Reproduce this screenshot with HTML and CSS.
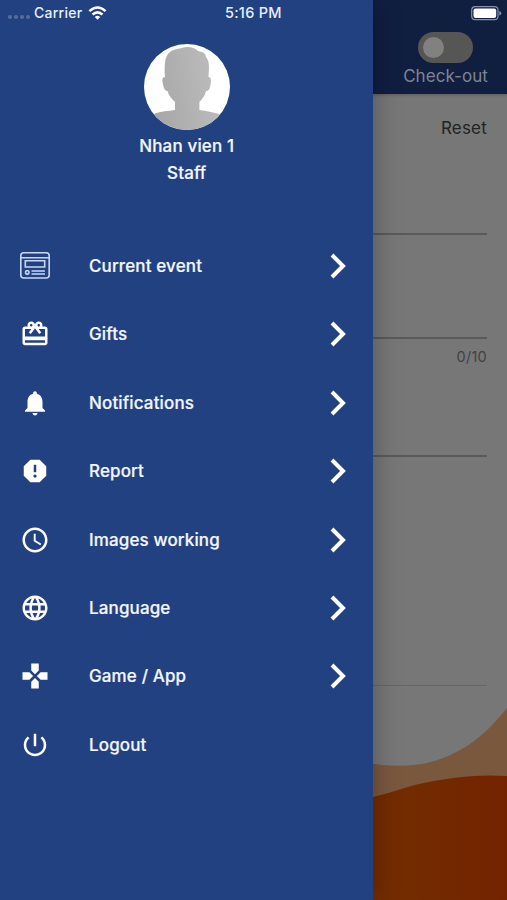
FILE: index.html
```html
<!DOCTYPE html>
<html lang="en">
<head>
<meta charset="utf-8">
<title>Menu</title>
<link rel="stylesheet" href="styles.css">
</head>
<body>
<div class="screen">
  <main class="page">
    <header class="topbar">
      <div class="checkout">
        <div class="switch"><span class="knob"></span></div>
        <span class="switch-label">Check-out</span>
      </div>
    </header>
    <div class="form">
      <div class="reset">Reset</div>
      <div class="field first"></div>
      <div class="field second"></div>
      <div class="counter">0/10</div>
      <div class="field third"></div>
      <div class="field last"></div>
    </div>
    <svg class="waves" viewBox="0 0 147 200" preserveAspectRatio="none">
      <defs><linearGradient id="lava" x1="0" x2="1"><stop offset="0" stop-color="#732d00"/><stop offset=".5" stop-color="#732a00"/><stop offset="1" stop-color="#732300"/></linearGradient></defs>
      <path fill="#7a583e" d="M0 62C42 69 70 67 100 50C119 40 134 24 147 8V200H0Z"/>
      <path fill="url(#lava)" d="M0 99C20 97 38 89 59 84C88 78 112 74 147 76V200H0Z"/>
    </svg>
  </main>
  <aside class="drawer">
    <div class="profile">
      <svg class="avatar" viewBox="0 0 86 86">
        <defs>
          <clipPath id="round"><circle cx="43" cy="43" r="43"/></clipPath>
          <linearGradient id="skin" x1="0" y1=".6" x2="1" y2=".4"><stop offset="0" stop-color="#a6a6a6"/><stop offset="1" stop-color="#bebebe"/></linearGradient>
        </defs>
        <g clip-path="url(#round)">
          <path fill="#fff" d="M0 0H86V86H0Z"/>
          <path fill="url(#skin)" d="M21 33C20.500 26 20 15 24 10C27 6 32 5 38 4C44 2 50 3 54 7C60 8 62 10 62 13C66 17 65 25 64.500 33C67 33 67.500 36 66.500 41C65.500 45 65 47 62 47C61 52 58 55 55.400 58V66C62 67 69 68 75 70L80 73V86H5V73L10 70C17 67 25 67 31 66V58C28 55 25 52 23.500 47C20.500 47 19.500 43 19 40C18 36 18 33 21 33Z"/>
        </g>
      </svg>
      <div class="name">Nhan vien 1</div>
      <div class="role">Staff</div>
    </div>
    <nav class="menu">
      <a class="item"><span class="icon"><svg class="wide" viewBox="0 0 30 27" fill="none" stroke="#c9d8f8" stroke-width="1.600"><rect x=".8" y=".8" width="28.400" height="25.200" rx="3"/><path d="M1 5.700H29M5.300 8.800H24.700V15H5.300ZM11.500 19H25M11.500 22H25"/><rect x="5.600" y="18.800" width="3.300" height="3.300" rx="1"/></svg></span><span class="label">Current event</span><svg class="chevron" viewBox="0 0 16 26"><path d="M2 2L13 13L2 24"/></svg></a>
      <a class="item"><span class="icon"><svg viewBox="0 0 24 24"><path d="M20 6h-2.180c.11-.31.18-.65.18-1 0-1.660-1.340-3-3-3-1.050 0-1.960.54-2.500 1.350l-.5.670-.5-.680C10.960 2.540 10.050 2 9 2 7.340 2 6 3.340 6 5c0 .35.07.69.18 1H4c-1.110 0-1.990.89-1.990 2L2 19c0 1.110.89 2 2 2h16c1.110 0 2-.89 2-2V8c0-1.110-.89-2-2-2zm-5-2c.55 0 1 .45 1 1s-.45 1-1 1-1-.45-1-1 .45-1 1-1zM9 4c.55 0 1 .45 1 1s-.45 1-1 1-1-.45-1-1 .45-1 1-1zm11 15H4v-2h16v2zm0-5H4V8h5.080L7 10.830 8.620 12 11 8.760l1-1.360 1 1.360L15.380 12 17 10.830 14.920 8H20v6z"/></svg></span><span class="label">Gifts</span><svg class="chevron" viewBox="0 0 16 26"><path d="M2 2L13 13L2 24"/></svg></a>
      <a class="item"><span class="icon"><svg viewBox="0 0 24 24"><path d="M12 22c1.100 0 2-.9 2-2h-4c0 1.100.89 2 2 2zm6-6v-5c0-3.070-1.640-5.640-4.500-6.320V4c0-.83-.67-1.500-1.500-1.500s-1.500.67-1.500 1.500v.68C7.630 5.360 6 7.920 6 11v5l-2 2v1h16v-1l-2-2z"/></svg></span><span class="label">Notifications</span><svg class="chevron" viewBox="0 0 16 26"><path d="M2 2L13 13L2 24"/></svg></a>
      <a class="item"><span class="icon"><svg viewBox="0 0 24 24"><path d="M15.730 3H8.270L3 8.270v7.460L8.270 21h7.460L21 15.730V8.270L15.730 3zM12 17.300c-.72 0-1.300-.58-1.300-1.300s.58-1.300 1.300-1.300 1.300.58 1.300 1.300-.58 1.300-1.300 1.300zm1-4.300h-2V7h2v6z"/></svg></span><span class="label">Report</span><svg class="chevron" viewBox="0 0 16 26"><path d="M2 2L13 13L2 24"/></svg></a>
      <a class="item"><span class="icon"><svg viewBox="0 0 24 24"><path d="M11.990 2C6.470 2 2 6.480 2 12s4.470 10 9.990 10C17.520 22 22 17.520 22 12S17.520 2 11.990 2zM12 20c-4.420 0-8-3.580-8-8s3.580-8 8-8 8 3.580 8 8-3.580 8-8 8zm.5-13H11v6l5.250 3.150.75-1.230-4.500-2.670z"/></svg></span><span class="label">Images working</span><svg class="chevron" viewBox="0 0 16 26"><path d="M2 2L13 13L2 24"/></svg></a>
      <a class="item"><span class="icon"><svg viewBox="0 0 24 24"><path d="M11.990 2C6.470 2 2 6.480 2 12s4.470 10 9.990 10C17.520 22 22 17.520 22 12S17.520 2 11.990 2zm6.930 6h-2.950c-.32-1.250-.78-2.450-1.380-3.560 1.840.63 3.370 1.910 4.330 3.560zM12 4.040c.83 1.200 1.480 2.530 1.910 3.960h-3.820c.43-1.430 1.080-2.760 1.910-3.960zM4.260 14C4.100 13.360 4 12.690 4 12s.1-1.360.26-2h3.380c-.08.66-.14 1.320-.14 2s.06 1.340.14 2H4.260zm.82 2h2.950c.32 1.250.78 2.450 1.380 3.560-1.840-.63-3.370-1.900-4.330-3.560zm2.950-8H5.080c.96-1.660 2.490-2.930 4.330-3.560C8.810 5.550 8.350 6.750 8.030 8zM12 19.960c-.83-1.200-1.480-2.530-1.910-3.960h3.820c-.43 1.430-1.080 2.760-1.910 3.960zM14.340 14H9.660c-.09-.66-.16-1.320-.16-2s.07-1.350.16-2h4.680c.09.65.16 1.320.16 2s-.07 1.340-.16 2zm.25 5.560c.6-1.110 1.060-2.310 1.380-3.560h2.950c-.96 1.650-2.490 2.930-4.330 3.560zM16.360 14c.08-.66.14-1.320.14-2s-.06-1.340-.14-2h3.380c.16.64.26 1.310.26 2s-.1 1.360-.26 2h-3.380z"/></svg></span><span class="label">Language</span><svg class="chevron" viewBox="0 0 16 26"><path d="M2 2L13 13L2 24"/></svg></a>
      <a class="item"><span class="icon"><svg viewBox="0 0 24 24"><path d="M15 7.500V2H9v5.500l3 3 3-3zM7.500 9H2v6h5.500l3-3-3-3zM9 16.500V22h6v-5.500l-3-3-3 3zM16.500 9l-3 3 3 3H22V9h-5.500z"/></svg></span><span class="label">Game / App</span><svg class="chevron" viewBox="0 0 16 26"><path d="M2 2L13 13L2 24"/></svg></a>
      <a class="item"><span class="icon"><svg viewBox="0 0 24 24"><path d="M13 3h-2v10h2V3zm4.830 2.170l-1.420 1.420C17.990 7.860 19 9.810 19 12c0 3.870-3.130 7-7 7s-7-3.130-7-7c0-2.190 1.010-4.140 2.580-5.420L6.170 5.170C4.230 6.820 3 9.260 3 12c0 4.970 4.030 9 9 9s9-4.030 9-9c0-2.740-1.230-5.180-3.170-6.830z"/></svg></span><span class="label">Logout</span></a>
    </nav>
  </aside>
  <div class="status">
    <span class="dots"><i></i><i></i><i></i><i></i></span>
    <span class="carrier">Carrier</span>
    <svg class="wifi" viewBox="0 0 18 14"><g fill="none" stroke="#fff" stroke-width="2.500"><path d="M.9 5.100Q9-2.200 17.100 5.100"/><path d="M4 8.500Q9 4.200 14 8.500"/></g><path fill="#fff" d="M6.300 10.900Q9 8.700 11.700 10.900L9 13.700Z"/></svg>
    <span class="time">5:16 PM</span>
    <svg class="battery" viewBox="0 0 31 15"><rect x=".7" y=".7" width="26.300" height="13" rx="3.500" fill="none" stroke="#8790ad" stroke-width="1.200"/><rect x="2.500" y="2.500" width="22.700" height="9.400" rx="2" fill="#fff"/><path d="M28.300 5Q30.300 5.500 30.300 7.200T28.300 9.500Z" fill="#8790ad"/></svg>
  </div>
</div>
</body>
</html>
```

FILE: styles.css
```css
* { box-sizing: border-box; }
body { margin: 0; font-family: Inter, "Liberation Sans", sans-serif; }
.screen { position: relative; width: 507px; height: 900px; overflow: hidden; background: #777; }
.page { height: 900px; display: flex; flex-direction: column; align-items: stretch; }
.topbar { height: 94px; flex: none; background: #101e40; display: flex; justify-content: flex-end; padding: 32px 19px 0 0; box-shadow: 0 1px 3px #4448; }
.checkout { display: flex; flex-direction: column; align-items: center; width: 85px; }
.switch { width: 55px; height: 31px; border-radius: 16px; background: #565654; padding: 5px; }
.knob { display: block; width: 21px; height: 21px; border-radius: 50%; background: #818181; }
.switch-label { margin-top: 2px; font-size: 17px; line-height: 22px; letter-spacing: .05px; color: #7f8592; white-space: nowrap; }
.form { height: 606px; flex: none; padding: 0 20px 0 360px; }
.reset { height: 68px; line-height: 68px; text-align: right; font-size: 17px; letter-spacing: .2px; color: #232323; }
.field { border-bottom: 2px solid #5a5a5a; }
.first { height: 73px; }
.second { height: 104px; }
.counter { height: 34px; line-height: 35px; text-align: right; font-size: 14.500px; letter-spacing: .25px; color: #414141; }
.third { height: 84px; }
.last { height: 229px; border-bottom: 1px solid #666; }
.waves { align-self: flex-end; width: 147px; height: 200px; flex: none; }
.drawer { position: absolute; left: 0; top: 0; width: 372.500px; height: 900px; background: #224181; box-shadow: 0 0 26px rgba(0,0,0,.3); display: flex; flex-direction: column; }
.profile { height: 231.800px; flex: none; padding: 44.400px 0 0 1px; display: flex; flex-direction: column; align-items: center; color: #f4f7ff; font-size: 17px; font-weight: 500; letter-spacing: .15px; }
.avatar { width: 86px; height: 86px; flex: none; }
.name { margin-top: 3px; line-height: 27px; }
.role { line-height: 27px; }
.item { height: 68.400px; padding: 0 27px 0 15px; display: flex; align-items: center; color: #f4f7ff; }
.icon { width: 40px; display: flex; justify-content: center; }
.icon svg { width: 30px; height: 30px; fill: #fff; }
.icon svg.wide { width: 30px; height: 27px; fill: none; }
.label { margin-left: 34px; flex: 1; font-size: 17px; font-weight: 500; letter-spacing: .13px; line-height: 24px; -webkit-text-stroke: .2px currentColor; }
.name, .role { -webkit-text-stroke: .2px currentColor; }
.chevron { width: 16px; height: 26px; fill: none; stroke: #fff; stroke-width: 4; }
.status { position: absolute; left: 0; top: 0; width: 507px; height: 26px; display: flex; align-items: center; padding: 0 5px 0 8px; color: #e8efff; font-size: 14px; font-weight: 500; letter-spacing: .25px; }
.dots { display: flex; gap: 2px; width: 22px; margin-top: 8px; }
.dots i { width: 4px; height: 4px; border-radius: 50%; background: #546ca0; }
.carrier { margin: -1px 0 0 4px; width: 49px; white-space: nowrap; }
.wifi { width: 19px; height: 14px; margin-left: 5px; }
.time { margin: -1px 0 0 118px; font-size: 14.500px; white-space: nowrap; }
.battery { width: 31px; height: 15px; margin-left: auto; }
```
